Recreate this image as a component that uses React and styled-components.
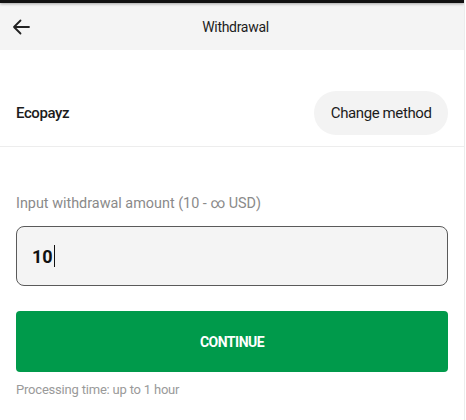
import styled, { createGlobalStyle } from "styled-components";

const GlobalStyle = createGlobalStyle`
  html, body {
    margin: 0;
    padding: 0;
    background: #fff;
  }
  body {
    font-family: Roboto, "Liberation Sans", sans-serif;
    color: #1c1c1c;
  }
`;

const Page = styled.div`
  width: 465px;
  height: 420px;
  border-right: 1px solid #ececec;
  box-sizing: border-box;
  background: #fff;
  overflow: hidden;
`;

const StatusStrip = styled.div`
  height: 3px;
  background: #111;
  box-shadow: 0 1px 3px rgba(0, 0, 0, 0.35);
  position: relative;
  z-index: 1;
`;

const Header = styled.header`
  height: 47px;
  background: #f4f4f4;
  display: grid;
  grid-template-columns: 48px 1fr 48px;
  align-items: center;
`;

const BackButton = styled.button`
  border: 0;
  background: transparent;
  padding: 0 0 0 12px;
  height: 100%;
  display: flex;
  align-items: center;
  cursor: pointer;
  color: #222;
`;

const Title = styled.h1`
  margin: 0;
  padding-left: 7px;
  text-align: center;
  font-size: 14px;
  letter-spacing: -0.3px;
  font-weight: 400;
  color: #1c1c1c;
`;

const MethodRow = styled.div`
  display: flex;
  align-items: center;
  justify-content: space-between;
  padding: 41px 16px 11px;
  border-bottom: 1px solid #ededed;
`;

const MethodName = styled.span`
  font-size: 15px;
  letter-spacing: -0.4px;
  font-weight: 500;
  color: #1c1c1c;
`;

const ChangeButton = styled.button`
  height: 44px;
  padding: 0 16.5px;
  border: 0;
  border-radius: 22px;
  background: #f3f3f3;
  font-family: inherit;
  font-size: 15px;
  letter-spacing: -0.4px;
  color: #1c1c1c;
  cursor: pointer;
`;

const Form = styled.div`
  padding: 48px 16px 0;
`;

const Label = styled.div`
  font-size: 14.4px;
  color: #8a8a8a;
  margin-bottom: 14px;
`;

const AmountBox = styled.div`
  height: 60px;
  box-sizing: border-box;
  border: 1.5px solid #5a5a5a;
  border-radius: 8px;
  background: #f4f4f4;
  display: flex;
  align-items: center;
  padding: 0 15px;
`;

const AmountValue = styled.span`
  font-size: 18px;
  font-weight: 700;
  color: #111;
`;

const Caret = styled.span`
  display: inline-block;
  width: 1px;
  height: 22px;
  background: #111;
  margin-left: 1px;
`;

const ContinueButton = styled.button`
  width: 100%;
  height: 61px;
  margin-top: 25px;
  border: 0;
  border-radius: 4px;
  background: #009a4b;
  color: #fff;
  font-family: inherit;
  font-size: 14px;
  letter-spacing: -0.5px;
  font-weight: 700;
  cursor: pointer;
`;

const Note = styled.div`
  margin-top: 10px;
  font-size: 13px;
  letter-spacing: -0.2px;
  color: #9a9a9a;
`;

export default function App() {
  return (
    <Page>
      <GlobalStyle />
      <StatusStrip />
      <Header>
        <BackButton aria-label="Back">
          <svg width="18" height="16" viewBox="0 0 18 16" fill="none">
            <path d="M17 8H2M8.5 1.5L2 8l6.5 6.5" stroke="#222" strokeWidth="1.8" strokeLinecap="round" strokeLinejoin="round" />
          </svg>
        </BackButton>
        <Title>Withdrawal</Title>
        <span />
      </Header>
      <MethodRow>
        <MethodName>Ecopayz</MethodName>
        <ChangeButton>Change method</ChangeButton>
      </MethodRow>
      <Form>
        <Label>Input withdrawal amount (10 - ∞ USD)</Label>
        <AmountBox>
          <AmountValue>10</AmountValue>
          <Caret />
        </AmountBox>
        <ContinueButton>CONTINUE</ContinueButton>
        <Note>Processing time: up to 1 hour</Note>
      </Form>
    </Page>
  );
}
